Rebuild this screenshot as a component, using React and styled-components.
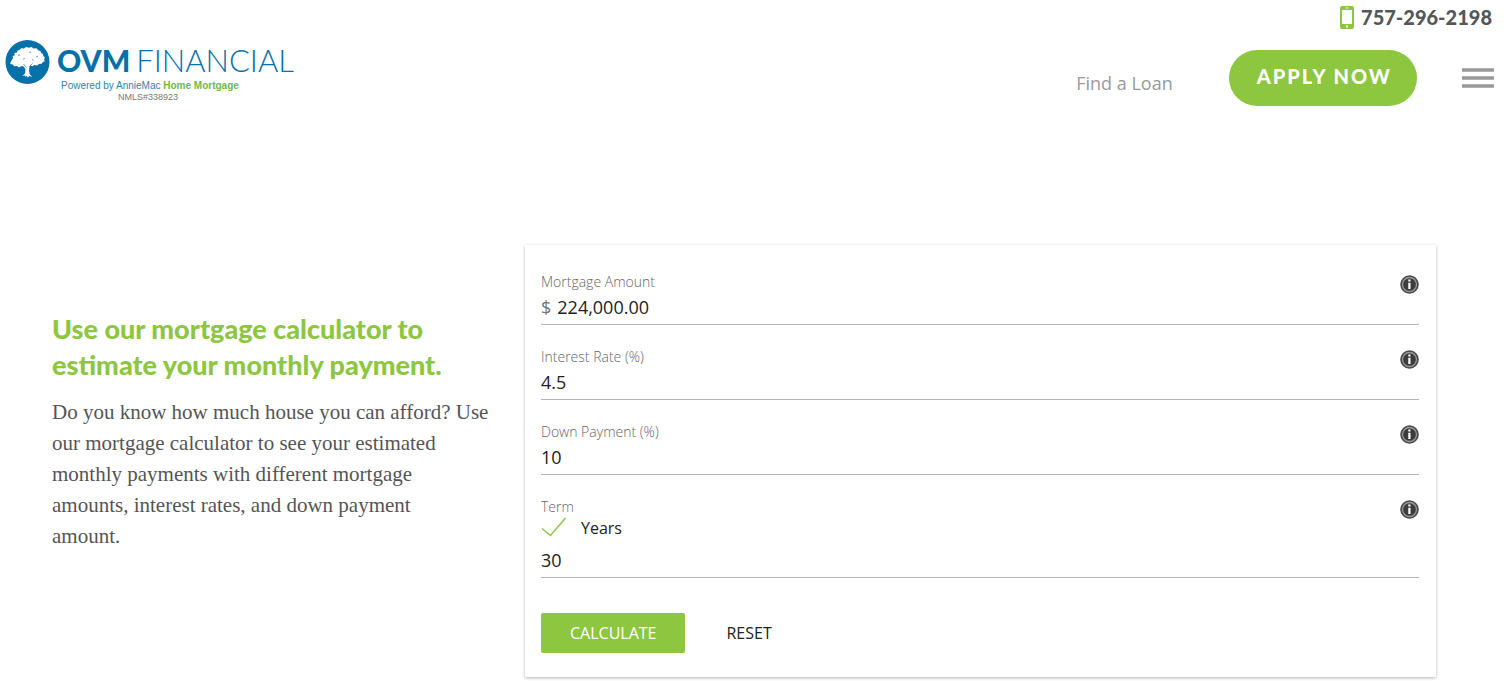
import React, { useState } from "react";
import styled, { createGlobalStyle } from "styled-components";

const GlobalStyle = createGlobalStyle`
  * {
    box-sizing: border-box;
  }
  body {
    margin: 0;
    background: #fff;
    color: #222;
    font-family: "Open Sans", sans-serif;
  }
`;

const Page = styled.div`
  min-height: 100vh;
`;

const Header = styled.header`
  display: flex;
  justify-content: space-between;
  align-items: flex-start;
`;

const Logo = styled.a`
  display: flex;
  gap: 7px;
  padding: 40px 0 0 5px;
  color: #0670a9;
  text-decoration: none;
`;

const LogoText = styled.div`
  display: flex;
  flex-direction: column;
`;

const LogoName = styled.span`
  display: flex;
  align-items: baseline;
  gap: 6px;
  font-family: Lato, sans-serif;
  font-size: 31px;
  line-height: 40px;
  font-weight: 300;
  white-space: nowrap;

  b {
    font-size: 30px;
    font-weight: 900;
  }
`;

const LogoTagline = styled.span`
  padding-left: 4px;
  font-family: "Liberation Sans", sans-serif;
  font-size: 10px;
  line-height: 12px;
  color: #2c83b6;

  b {
    color: #6cbb45;
  }
`;

const LogoLicense = styled.span`
  padding-left: 61px;
  font-family: "Liberation Sans", sans-serif;
  font-size: 9px;
  line-height: 11px;
  color: #777;
`;

const HeaderRight = styled.div`
  display: flex;
  flex-direction: column;
  align-items: flex-end;
  padding: 4px 10px 0 0;
`;

const Phone = styled.a`
  display: flex;
  align-items: center;
  gap: 7px;
  padding-right: 2px;
  color: #54575a;
  font-family: Lato, sans-serif;
  font-size: 20px;
  line-height: 26px;
  font-weight: 900;
  text-decoration: none;
`;

const Nav = styled.nav`
  display: flex;
  align-items: center;
  margin-top: 20px;
`;

const NavLink = styled.a`
  margin-right: 56px;
  padding-top: 10px;
  color: #999;
  font-size: 18px;
  line-height: 24px;
  text-decoration: none;
`;

const ApplyLink = styled.a`
  height: 56px;
  margin-right: 45px;
  padding: 0 25px 0 28px;
  border-radius: 28px;
  background: #8dc63f;
  color: #fff;
  font-family: Lato, sans-serif;
  font-size: 20px;
  line-height: 52px;
  font-weight: 900;
  letter-spacing: 2px;
  text-decoration: none;
`;

const MenuButton = styled.button`
  display: flex;
  padding: 0;
  border: 0;
  background: none;
  color: #999;
  cursor: pointer;
`;

const Main = styled.main`
  display: flex;
  align-items: flex-start;
  padding: 139px 68px 0 52px;
`;

const Intro = styled.section`
  flex: 0 0 473px;
  padding: 66px 32px 0 0;

  @media (max-width: 1100px) {
    flex-basis: 320px;
  }
`;

const Title = styled.h1`
  margin: 0 0 14px;
  color: #8dc63f;
  font-family: Lato, sans-serif;
  font-size: 27px;
  line-height: 36px;
  font-weight: 900;
`;

const Lead = styled.p`
  margin: 0;
  color: #555;
  font-family: "Roboto Slab", "Liberation Serif", serif;
  font-size: 21px;
  line-height: 31px;
  font-weight: 300;
`;

const Card = styled.form`
  flex: 1;
  min-width: 0;
  padding: 25px 17px 24px 16px;
  background: #fff;
  box-shadow: 0 1px 3px rgba(0, 0, 0, 0.3);
`;

const Field = styled.div`
  margin-bottom: 20px;
`;

const FieldHead = styled.div`
  display: flex;
  justify-content: space-between;
  align-items: flex-end;
  height: 24px;
`;

const Label = styled.label`
  color: #666;
  font-size: 14px;
  line-height: 24px;
  font-weight: 300;
`;

const InfoButton = styled.button`
  display: flex;
  padding: 0;
  border: 0;
  background: none;
  cursor: pointer;
`;

const InputRow = styled.div`
  display: flex;
  gap: 6px;
  height: 31px;
  padding-bottom: 3px;
  border-bottom: 1px solid #b5b5b5;
  font-size: 18px;
`;

const Prefix = styled.span`
  color: #757575;
  line-height: 27px;
`;

const Input = styled.input`
  flex: 1;
  min-width: 0;
  padding: 0;
  border: 0;
  outline: 0;
  background: none;
  color: #222;
  font: inherit;
  line-height: 27px;
`;

const UnitOption = styled.label`
  display: flex;
  gap: 14px;
  height: 30px;
  margin-top: -2px;
  font-size: 16px;
  line-height: 22px;
  cursor: pointer;
`;

const UnitCheckbox = styled.input`
  appearance: none;
  position: absolute;
  margin: 0;
  opacity: 0;
`;

const Actions = styled.div`
  display: flex;
  padding-top: 15px;
`;

const Button = styled.button`
  height: 40px;
  padding: 0 29px;
  border: 0;
  border-radius: 2px;
  background: ${props => (props.$primary ? "#8dc63f" : "transparent")};
  color: ${props => (props.$primary ? "#fff" : "#222")};
  font-family: inherit;
  font-size: 16px;
  text-transform: uppercase;
  cursor: pointer;

  & + & {
    margin-left: 12px;
  }
`;

function TreeMark() {
  return (
    <svg width="45" height="45" viewBox="0 0 45 45" aria-hidden="true">
      <circle cx="22.500" cy="22" r="22" fill="#0670a9" />
      <path
        fill="#fff"
        d="M12.500 10.500l2.500-.8 1-1.500 3 .3 2-1.500 3 .8 2.500-.8 2 1.500 3-.2 1.500 2 2.500.7.5 2 2 1 .2 2 1.800 1.500-1 1.800.8 2-2 .8-1 1.700-3 .2-1.500 1.500-3-.5-1.500 1.200-2.500-.4-1 1.700-.2 3.500.7 3.500 2.700 2.300-3.500-.8-1 1.700-1.200-1.700-1.800.8.3-1.500-3 .8 2.700-2.500.5-4.500-2.500-3-2.500.4-1.500 1-2-1.500-3 .3-1.200-1.800-2.500-.5.3-1.700L7 19.500l1.200-1.500-.7-1.800 2.200-1-.2-2.200 2.500-.5z"
      />
      <path
        d="M18.500 24l3 3.500M27.500 23.500L24 27M13 15.500l2-.5M24 12l2 .5M31 17l2-.7M18 19l2-.5M27 19.500l1.500.5"
        stroke="#0670a9"
        strokeWidth=".6"
      />
    </svg>
  );
}

function PhoneIcon() {
  return (
    <svg width="14" height="23" viewBox="0 0 14 23" aria-hidden="true">
      <rect width="14" height="23" rx="2" fill="#8dc63f" />
      <path d="M2 4h10v14H2z" fill="#fff" />
      <path d="M5 2h4" stroke="#d5eab6" />
      <rect x="6" y="19.500" width="2" height="2" fill="#fff" />
    </svg>
  );
}

function InfoIcon() {
  return (
    <svg width="19" height="19" viewBox="0 0 19 19" aria-hidden="true">
      <circle cx="9.500" cy="9.500" r="9.300" fill="#4a4a4a" />
      <circle cx="9.500" cy="9.500" r="7" fill="#3c3c3c" stroke="#999" strokeWidth="1.300" />
      <path d="M8.300 4.500h2.200v2H8.300zM8.300 7.800h2.200v6.200H8.300z" fill="#fff" />
    </svg>
  );
}

function CheckIcon() {
  return (
    <svg width="26" height="20" viewBox="0 0 26 20" aria-hidden="true">
      <path d="M1 11.500l8.500 7L24.500 1" fill="none" stroke="#8dc63f" strokeWidth="1.500" />
    </svg>
  );
}

function FormField(props) {
  return (
    <Field>
      <FieldHead>
        <Label htmlFor={props.id}>{props.label}</Label>
        <InfoButton type="button" aria-label={"About " + props.label}>
          <InfoIcon />
        </InfoButton>
      </FieldHead>
      {props.children}
      <InputRow>
        {props.prefix && <Prefix>{props.prefix}</Prefix>}
        <Input
          id={props.id}
          name={props.id}
          value={props.value}
          onChange={props.onChange}
        />
      </InputRow>
    </Field>
  );
}

const defaults = {
  amount: "224,000.00",
  rate: "4.5",
  down: "10",
  term: "30"
};

export default function App() {
  const [values, setValues] = useState(defaults);
  const [years, setYears] = useState(true);

  const field = id => ({
    id,
    value: values[id],
    onChange: e => setValues({ ...values, [id]: e.target.value })
  });

  return (
    <Page>
      <GlobalStyle />
      <Header>
        <Logo href="#">
          <TreeMark />
          <LogoText>
            <LogoName>
              <b>OVM</b>
              <span>FINANCIAL</span>
            </LogoName>
            <LogoTagline>
              Powered by AnnieMac <b>Home Mortgage</b>
            </LogoTagline>
            <LogoLicense>NMLS#338923</LogoLicense>
          </LogoText>
        </Logo>
        <HeaderRight>
          <Phone href="tel:757-296-2198">
            <PhoneIcon />
            757-296-2198
          </Phone>
          <Nav>
            <NavLink href="#">Find a Loan</NavLink>
            <ApplyLink href="#">APPLY NOW</ApplyLink>
            <MenuButton type="button" aria-label="Menu">
              <svg width="32" height="20" viewBox="0 0 32 20" aria-hidden="true">
                <path
                  d="M0 2h32M0 10h32M0 18h32"
                  stroke="currentColor"
                  strokeWidth="3.500"
                />
              </svg>
            </MenuButton>
          </Nav>
        </HeaderRight>
      </Header>
      <Main>
        <Intro>
          <Title>Use our mortgage calculator to estimate your monthly payment.</Title>
          <Lead>
            Do you know how much house you can afford? Use our mortgage
            calculator to see your estimated monthly payments with different
            mortgage amounts, interest rates, and down payment
            <br />
            amount.
          </Lead>
        </Intro>
        <Card onSubmit={e => e.preventDefault()}>
          <FormField label="Mortgage Amount" prefix="$" {...field("amount")} />
          <FormField label="Interest Rate (%)" {...field("rate")} />
          <FormField label="Down Payment (%)" {...field("down")} />
          <FormField label="Term" {...field("term")}>
            <UnitOption>
              <UnitCheckbox
                type="checkbox"
                checked={years}
                onChange={() => setYears(!years)}
              />
              {years ? <CheckIcon /> : null}
              Years
            </UnitOption>
          </FormField>
          <Actions>
            <Button type="submit" $primary>
              Calculate
            </Button>
            <Button type="button" onClick={() => setValues(defaults)}>
              Reset
            </Button>
          </Actions>
        </Card>
      </Main>
    </Page>
  );
}
